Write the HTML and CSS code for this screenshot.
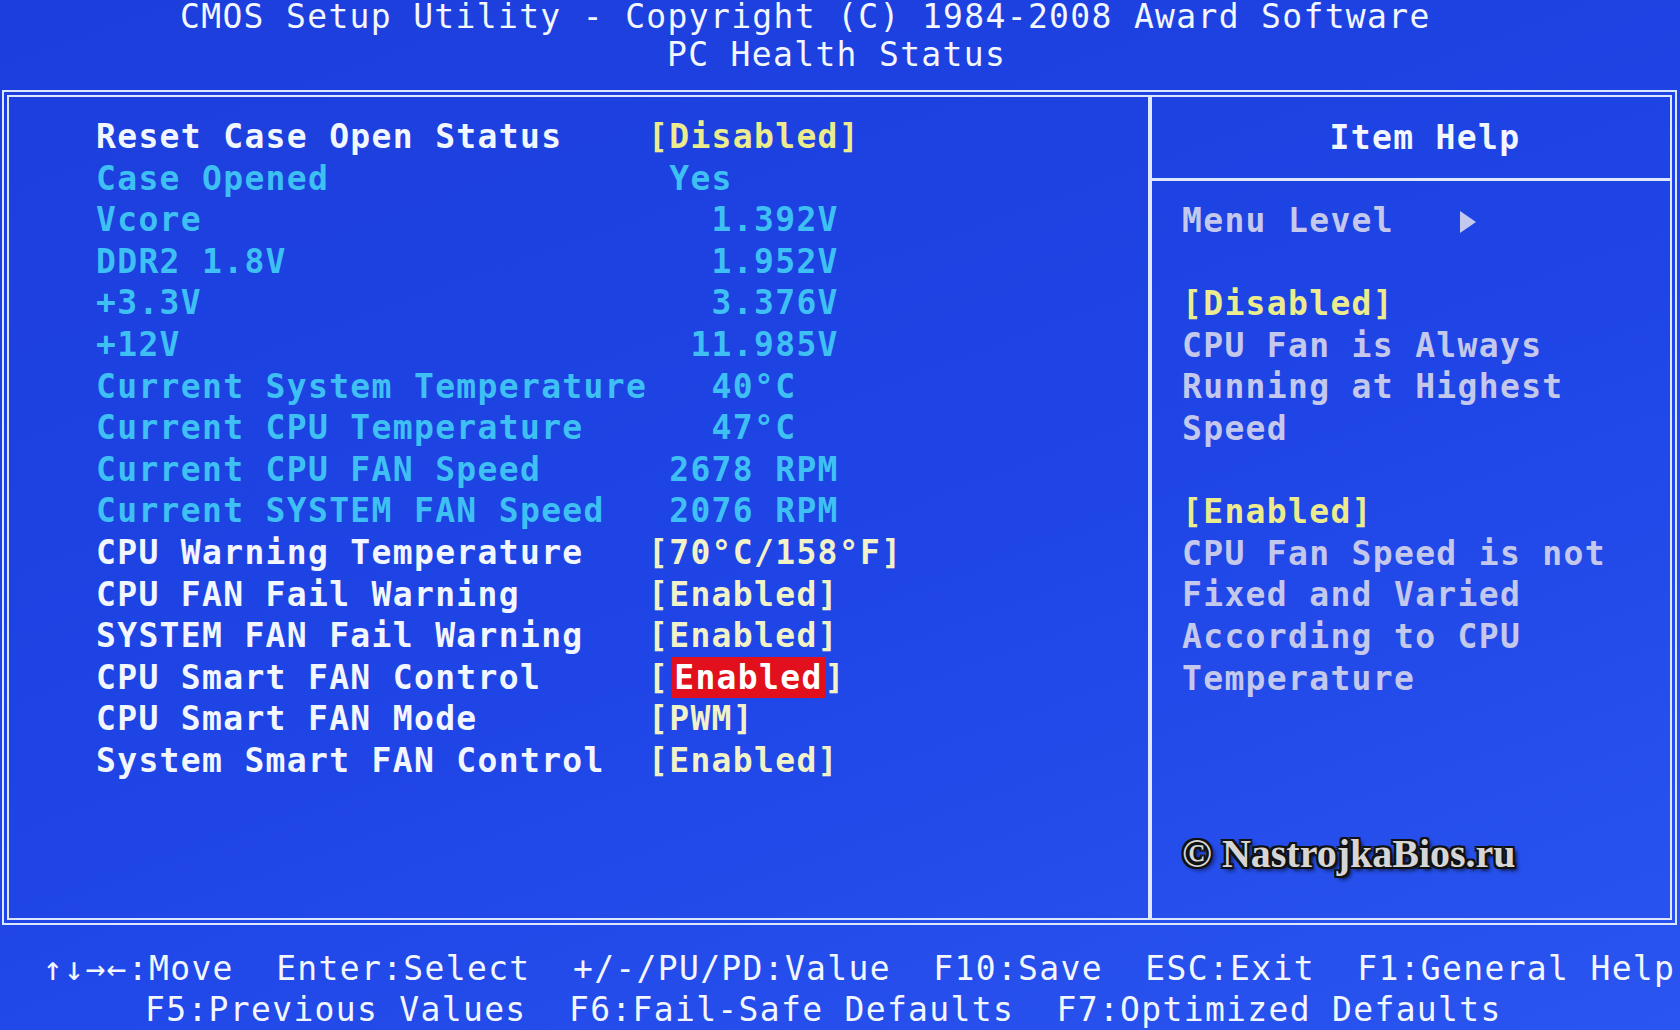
FILE: index.html
```html
<!DOCTYPE html>
<html lang="en">
<head>
  <meta charset="UTF-8" />
  <title>PC Health Status</title>
  <link rel="stylesheet" href="styles.css">
</head>
<body>
  <div class="screen">
    <header class="title">
      <div class="title-line first">CMOS Setup Utility - Copyright (C) 1984-2008 Award Software</div>
      <div class="title-line second">PC Health Status</div>
    </header>

    <div class="frame">
      <div class="items">
        <div class="row"><span class="label">Reset Case Open Status</span><span class="value pick">[Disabled]</span></div>
        <div class="row info"><span class="label">Case Opened</span><span class="value"> Yes</span></div>
        <div class="row info"><span class="label">Vcore</span><span class="value">   1.392V</span></div>
        <div class="row info"><span class="label">DDR2 1.8V</span><span class="value">   1.952V</span></div>
        <div class="row info"><span class="label">+3.3V</span><span class="value">   3.376V</span></div>
        <div class="row info"><span class="label">+12V</span><span class="value">  11.985V</span></div>
        <div class="row info"><span class="label">Current System Temperature</span><span class="value">   40°C</span></div>
        <div class="row info"><span class="label">Current CPU Temperature</span><span class="value">   47°C</span></div>
        <div class="row info"><span class="label">Current CPU FAN Speed</span><span class="value"> 2678 RPM</span></div>
        <div class="row info"><span class="label">Current SYSTEM FAN Speed</span><span class="value"> 2076 RPM</span></div>
        <div class="row"><span class="label">CPU Warning Temperature</span><span class="value">[70°C/158°F]</span></div>
        <div class="row"><span class="label">CPU FAN Fail Warning</span><span class="value">[Enabled]</span></div>
        <div class="row"><span class="label">SYSTEM FAN Fail Warning</span><span class="value">[Enabled]</span></div>
        <div class="row"><span class="label">CPU Smart FAN Control</span><span class="value">[<span class="selected">Enabled</span>]</span></div>
        <div class="row"><span class="label">CPU Smart FAN Mode</span><span class="value">[PWM]</span></div>
        <div class="row"><span class="label">System Smart FAN Control</span><span class="value">[Enabled]</span></div>
      </div>

      <aside class="help">
        <div class="help-title">Item Help</div>
        <div class="help-body">
          <div class="line">Menu Level   <svg class="level-arrow" width="20" height="26" viewBox="0 0 20 26"><path d="M2 2 L18 13 L2 24 Z" fill="#c4c8ec"/></svg></div>
          <div class="line"></div>
          <div class="line pick">[Disabled]</div>
          <div class="line">CPU Fan is Always</div>
          <div class="line">Running at Highest</div>
          <div class="line">Speed</div>
          <div class="line"></div>
          <div class="line pick">[Enabled]</div>
          <div class="line">CPU Fan Speed is not</div>
          <div class="line">Fixed and Varied</div>
          <div class="line">According to CPU</div>
          <div class="line">Temperature</div>
          <div class="watermark">© NastrojkaBios.ru</div>
        </div>
      </aside>
    </div>

    <footer class="keys">
      <div class="key-line">↑↓→←:Move  Enter:Select  +/-/PU/PD:Value  F10:Save  ESC:Exit  F1:General Help</div>
      <div class="key-line second">F5:Previous Values  F6:Fail-Safe Defaults  F7:Optimized Defaults</div>
    </footer>
  </div>
</body>
</html>
```

FILE: styles.css
```css
html,
body {
  margin: 0;
  padding: 0;
}
body {
  background: #1f43e3;
  overflow: hidden;
}
.screen {
  width: 1680px;
  height: 1030px;
  background: linear-gradient(160deg, #1c3edc 0%, #1f45e6 55%, #2a55f0 100%);
  font-family: "DejaVu Sans Mono", "Liberation Mono", monospace;
  font-size: 33px;
  letter-spacing: 1.33px;
  color: #f2f6ff;
}
.title-line,
.row,
.line,
.key-line,
.watermark {
  white-space: pre;
}

/* top title */
.title {
  height: 90px;
  font-weight: normal;
}
.title-line.first {
  line-height: 30px;
  padding: 2px 0 0 180px;
}
.title-line.second {
  line-height: 46px;
  padding-left: 667px;
}

/* main double frame */
.frame {
  height: 835px;
  box-sizing: border-box;
  margin: 0 3px 0 2px;
  border: 7px double #dce6ff;
  display: grid;
  grid-template-columns: 1139px 1fr;
}
.items {
  padding: 19px 0 0 87px;
  font-weight: bold;
}
.row {
  display: flex;
  height: 41.6px;
  line-height: 41.6px;
}
.label {
  width: 552px;
  flex: none;
}
.value {
  color: #f2f2c8;
}
.pick {
  color: #ecec8e;
}
.row.info,
.row.info .value {
  color: #3ec0f4;
}
.selected {
  display: inline-block;
  margin-left: 3px;
  padding: 0 2px;
  background: #e2101c;
  color: #ffffff;
  line-height: 41.6px;
}

/* right help panel */
.help {
  border-left: 4px solid #dfe8ff;
  display: flex;
  flex-direction: column;
  font-weight: bold;
  color: #c4c8ec;
}
.help-title {
  height: 81px;
  line-height: 81px;
  border-bottom: 3px solid #dfe8ff;
  text-align: center;
  padding-left: 28px;
  color: #f2f6ff;
}
.help-body {
  flex: 1;
  display: flex;
  flex-direction: column;
  padding: 19px 0 0 30px;
}
.line {
  height: 41.6px;
  line-height: 41.6px;
}
.line.pick {
  color: #ecec8e;
}
.level-arrow {
  vertical-align: -3px;
}
.watermark {
  margin-top: auto;
  margin-bottom: 42px;
  font-family: "Liberation Serif", "DejaVu Serif", serif;
  font-size: 40px;
  font-weight: bold;
  letter-spacing: 0;
  line-height: 44px;
  color: #d6d6d6;
  text-shadow: 2px 2px 0 #111, -2px -2px 0 #111, 2px -2px 0 #111, -2px 2px 0 #111, 0 2px 0 #111, 0 -2px 0 #111, 2px 0 0 #111, -2px 0 0 #111, 3px 3px 4px #000;
}

/* key legend */
.keys {
  padding-top: 23px;
  color: #f2f6ff;
}
.key-line {
  height: 41px;
  line-height: 41px;
  padding-left: 43px;
}
.key-line.second {
  padding-left: 145px;
}
```
